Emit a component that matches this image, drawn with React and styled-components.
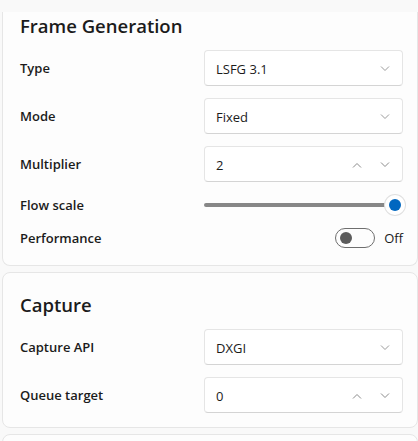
import styled, { createGlobalStyle } from "styled-components";

const GlobalStyle = createGlobalStyle`
  html, body {
    margin: 0;
    padding: 0;
    background: #f9f9f9;
    font-family: "Open Sans", "Noto Sans", sans-serif;
    color: #1b1b1b;
  }
`;

const Page = styled.div`
  height: 441px;
  overflow: hidden;
  padding: 12px 0 0 2px;
  display: flex;
  flex-direction: column;
  gap: 6px;
`;

const Card = styled.section`
  background: #fdfdfd;
  border: 1px solid #e6e6e6;
  border-top: ${(p) => (p.$clipped ? "none" : "1px solid #e6e6e6")};
  border-radius: ${(p) => (p.$clipped ? "0 0 8px 8px" : "8px")};
  padding: ${(p) => (p.$clipped ? "0" : "18px")} 14px ${(p) => p.$pb ?? 14}px 17px;
  display: flex;
  flex-direction: column;
  gap: 12px;
  flex-shrink: 0;
`;

const Title = styled.h2`
  margin: 0 0 -2px;
  font-size: 18.5px;
  line-height: 28px;
  font-weight: 600;
  color: #1b1b1b;
`;

const Row = styled.div`
  display: grid;
  grid-template-columns: 1fr 199px;
  align-items: center;
  height: ${(p) => p.$h || 36}px;
`;

const Label = styled.span`
  font-size: 13px;
  font-weight: 600;
  color: #1b1b1b;
`;

const Box = styled.div`
  height: 36px;
  box-sizing: border-box;
  background: #ffffff;
  border: 1px solid #e5e5e5;
  border-bottom-color: #d4d4d4;
  border-radius: 4px;
  display: flex;
  align-items: center;
  padding: 1px 12px 0 11px;
  font-size: 13px;
  color: #1b1b1b;
`;

const Value = styled.span`
  flex: 1;
`;

const Spin = styled.span`
  display: flex;
  gap: 18px;
  color: #8a8a8a;
`;

const Slider = styled.div`
  position: relative;
  height: 22px;
  display: flex;
  align-items: center;
`;

const Track = styled.div`
  height: 4px;
  width: 100%;
  border-radius: 2px;
  background: #878787;
`;

const Thumb = styled.div`
  position: absolute;
  right: -2px;
  top: 50%;
  transform: translateY(-50%);
  width: 20px;
  height: 20px;
  border-radius: 50%;
  background: #fff;
  box-shadow: 0 0 0 1px #e0e0e0;
  display: grid;
  place-items: center;
  &::after {
    content: "";
    width: 12px;
    height: 12px;
    border-radius: 50%;
    background: #0067c0;
  }
`;

const ToggleWrap = styled.div`
  display: flex;
  align-items: center;
  justify-content: flex-end;
  gap: 9px;
  font-size: 13px;
  color: #1b1b1b;
`;

const Toggle = styled.div`
  width: 40px;
  height: 20px;
  box-sizing: border-box;
  border: 1px solid #6e6e6e;
  border-radius: 10px;
  display: flex;
  align-items: center;
  padding-left: 4px;
  &::after {
    content: "";
    width: 12px;
    height: 12px;
    border-radius: 50%;
    background: #5c5c5c;
  }
`;

const Chevron = ({ up, color = "#9a9a9a" }) => (
  <svg width="10" height="6" viewBox="0 0 10 6">
    <path
      d={up ? "M1 5.5 L5 1.5 L9 5.5" : "M1 0.5 L5 4.5 L9 0.5"}
      fill="none"
      stroke={color}
      strokeWidth="1"
    />
  </svg>
);

const Combo = ({ value }) => (
  <Box>
    <Value>{value}</Value>
    <Chevron />
  </Box>
);

const NumberBox = ({ value }) => (
  <Box>
    <Value>{value}</Value>
    <Spin>
      <Chevron up color="#8a8a8a" />
      <Chevron color="#8a8a8a" />
    </Spin>
  </Box>
);

export default function App() {
  return (
    <>
      <GlobalStyle />
      <Page>
        <Card $clipped $pb={17}>
          <Title>Frame Generation</Title>
          <Row>
            <Label>Type</Label>
            <Combo value="LSFG 3.1" />
          </Row>
          <Row>
            <Label>Mode</Label>
            <Combo value="Fixed" />
          </Row>
          <Row>
            <Label>Multiplier</Label>
            <NumberBox value="2" />
          </Row>
          <Row $h={22}>
            <Label>Flow scale</Label>
            <Slider>
              <Track />
              <Thumb />
            </Slider>
          </Row>
          <Row $h={20}>
            <Label>Performance</Label>
            <ToggleWrap>
              <Toggle />
              <span>Off</span>
            </ToggleWrap>
          </Row>
        </Card>
        <Card>
          <Title>Capture</Title>
          <Row>
            <Label>Capture API</Label>
            <Combo value="DXGI" />
          </Row>
          <Row>
            <Label>Queue target</Label>
            <NumberBox value="0" />
          </Row>
        </Card>
        <Card />
      </Page>
    </>
  );
}
